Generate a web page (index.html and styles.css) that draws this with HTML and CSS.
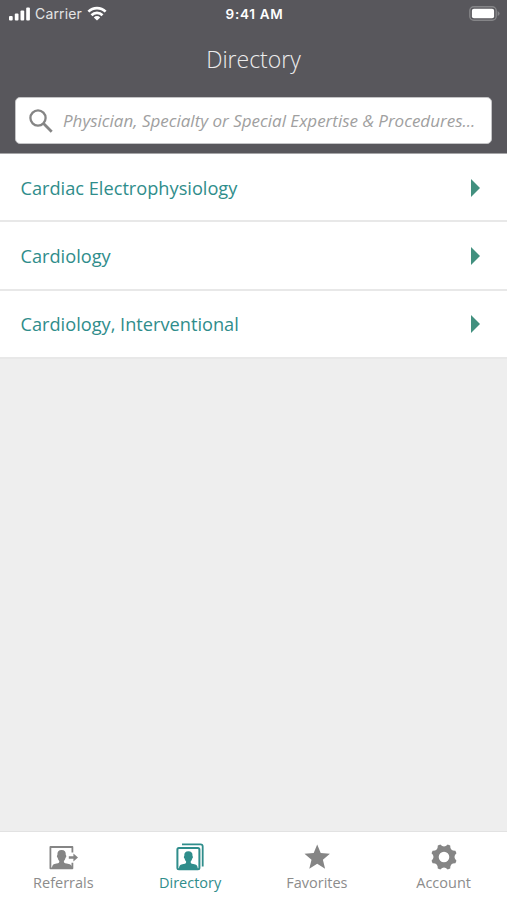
FILE: index.html
```html
<!DOCTYPE html>
<html lang="en">
<head>
    <meta charset="UTF-8">
    <meta name="viewport" content="width=device-width, initial-scale=1.0">
    <title>Directory</title>
    <link rel="stylesheet" href="styles.css">
</head>
<body>
    <header class="header">
        <div class="status-bar">
            <div class="status-left">
                <svg class="signal" width="22" height="14" viewBox="0 0 22 14" fill="currentColor">
                    <rect x="0" y="9" width="3.7" height="4.6" rx="1"/>
                    <rect x="5.8" y="6.5" width="3.7" height="7.1" rx="1"/>
                    <rect x="11.500" y="3.500" width="3.7" height="10.1" rx="1"/>
                    <rect x="17.2" y="0.500" width="3.7" height="13.1" rx="1"/>
                </svg>
                <span class="carrier">Carrier</span>
                <svg class="wifi" width="20" height="15" viewBox="0 0 20 15" fill="none" stroke="currentColor" stroke-width="2.700">
                    <path d="M1.400 5.600a12.200 12.200 0 0 1 17.200 0"/>
                    <path d="M4.500 9.200a7.700 7.700 0 0 1 11 0"/>
                    <path d="M10 14.600l-3.200-3.200a4.500 4.500 0 0 1 6.400 0z" fill="currentColor" stroke="none"/>
                </svg>
            </div>
            <span class="time">9:41 AM</span>
            <svg class="battery" width="31" height="15" viewBox="0 0 31 15">
                <rect x="0.8" y="0.8" width="26.4" height="13.4" rx="4" fill="none" stroke="#858588" stroke-width="1.4"/>
                <rect x="2.9" y="2.8" width="22.2" height="9.4" rx="2" fill="#fff"/>
                <path d="M28.6 5v5q2-1 2-2.500t-2-2.500z" fill="#858588"/>
            </svg>
        </div>
        <h1>Directory</h1>
        <form class="search">
            <svg width="24" height="24" viewBox="0 0 24 24" fill="none" stroke="#858585" stroke-width="2.300">
                <circle cx="9" cy="9" r="7.600"/>
                <path d="M14.300 14.300l8.400 8.400" stroke-width="2.800"/>
            </svg>
            <input type="text" placeholder="Physician, Specialty or Special Expertise &amp; Procedures...">
        </form>
    </header>

    <main class="list">
        <a class="row">Cardiac Electrophysiology <span class="arrow"></span></a>
        <a class="row">Cardiology <span class="arrow"></span></a>
        <a class="row">Cardiology, Interventional <span class="arrow"></span></a>
    </main>

    <nav class="tabs">
        <a class="tab">
            <svg width="30" height="28" viewBox="0 0 30 28">
                <path d="M24.400 9.500V4H2.400v21.300h22v-5.500" fill="none" stroke="currentColor" stroke-width="1.800" stroke-linejoin="round"/>
                <path d="M4 25.500c0-3.700 1.500-4.400 4.600-5 2.400-.5 2.800-1 2.700-2.600-1-1-1.400-2-1.600-3.200-1-.6-1-2.200-.3-2.800C9.200 8.700 10.600 7 13.600 7s4.400 1.700 4.200 4.900c.7.600.7 2.200-.3 2.800-.2 1.200-.6 2.200-1.600 3.200-.1 1.600.3 2.100 2.700 2.600 3.100.6 5.800 1.300 5.800 5z" fill="currentColor"/>
                <path d="M20.800 13.200h4.600v-2.700l4.600 4-4.600 4v-2.700h-4.600z" fill="currentColor"/>
            </svg>
            <span>Referrals</span>
        </a>
        <a class="tab active">
            <svg width="30" height="28" viewBox="0 0 30 28">
                <path d="M7 1.400h18.500q2.200 0 2.200 2.200v20" fill="none" stroke="currentColor" stroke-width="1.800"/>
                <rect x="2.400" y="5" width="22" height="21.300" rx="1.500" fill="none" stroke="currentColor" stroke-width="2"/>
                <path d="M4 26c0-3.700 1.500-4.300 4.500-4.900 2.400-.5 2.700-1 2.600-2.600-.9-.9-1.300-1.800-1.500-3-.9-.6-.9-2-.3-2.600C9.100 9.900 10.500 8.300 13.400 8.300s4.300 1.600 4.100 4.600c.6.600.6 2-.3 2.600-.2 1.200-.6 2.100-1.500 3-.1 1.600.2 2.100 2.600 2.600 3 .6 4.500 1.200 4.500 4.900z" fill="currentColor"/>
            </svg>
            <span>Directory</span>
        </a>
        <a class="tab">
            <svg width="30" height="28" viewBox="0 0 30 28" fill="currentColor">
                <path d="M15.200 1.500l3.500 8.600 9.200.6-7 6 2.200 9-7.900-4.900-7.900 4.900 2.200-9-7-6 9.200-.6z"/>
            </svg>
            <span>Favorites</span>
        </a>
        <a class="tab">
            <svg width="30" height="28" viewBox="-15 -14 30 28" fill="currentColor">
                <path fill-rule="evenodd" d="M-3.690-12.460Q0-8.500 3.690-12.460L6.200-11.420Q6-6 11.420-6.200L12.460-3.690Q8.500 0 12.460 3.690L11.420 6.200Q6 6 6.200 11.420L3.690 12.460Q0 8.500-3.690 12.460L-6.200 11.420Q-6 6-11.420 6.200L-12.460 3.690Q-8.500 0-12.460-3.690L-11.420-6.200Q-6-6-6.200-11.420ZM-5.300 0a5.300 5.300 0 1 0 10.600 0a5.300 5.300 0 1 0-10.600 0Z"/>
            </svg>
            <span>Account</span>
        </a>
    </nav>
</body>
</html>
```

FILE: styles.css
```css
:root {
    --header-color: #58575c;
    --primary-color: #2f8d8b;
    --arrow-color: #42907f;
    --icon-color: #858585;
    --background-color: #eeeeee;
}

* {
    box-sizing: border-box;
}

body {
    margin: 0;
    height: 900px;
    display: flex;
    flex-direction: column;
    font-family: 'Open Sans', sans-serif;
    background-color: var(--background-color);
}

.header {
    height: 154px;
    background-color: var(--header-color);
    border-bottom: 1px solid #a5a5a7;
    color: #fff;
}

.status-bar {
    display: grid;
    grid-template-columns: 1fr auto 1fr;
    align-items: center;
    height: 27px;
    padding: 0 7px 0 9px;
    font-family: Inter, sans-serif;
    font-size: 14px;
}

.status-left {
    display: flex;
    align-items: center;
}

.carrier {
    margin: 0 5px 0 4px;
    letter-spacing: 0.15px;
    color: #e4e4e5;
}

.time {
    font-size: 13.5px;
    font-weight: 600;
    letter-spacing: 0.7px;
}

.battery {
    justify-self: end;
}

h1 {
    margin: 14px 0 0;
    font-size: 23px;
    font-weight: 300;
    line-height: 36px;
    text-align: center;
    color: #ededee;
}

.search {
    display: flex;
    align-items: center;
    height: 47px;
    margin: 20px 15px 0;
    padding: 0 13px;
    background-color: #fff;
    border: 1px solid #c4c4c6;
    border-radius: 5px;
}

.search svg {
    flex-shrink: 0;
}

.search input {
    flex: 1;
    min-width: 0;
    margin-left: 10px;
    padding: 0;
    border: none;
    outline: none;
    background: none;
    font-family: inherit;
    font-size: 17px;
    font-style: italic;
}

.search input::placeholder {
    color: #a0a0a0;
}

.list {
    flex: 1;
}

.row {
    display: flex;
    align-items: center;
    justify-content: space-between;
    height: 68.3px;
    padding: 1px 27px 0 20.5px;
    background-color: #fff;
    border-bottom: 2px solid #e8e8e8;
    font-size: 18.2px;
    color: var(--primary-color);
}

.arrow {
    border-left: 9px solid var(--arrow-color);
    border-top: 9px solid transparent;
    border-bottom: 9px solid transparent;
}

.tabs {
    display: grid;
    grid-template-columns: repeat(4, 1fr);
    height: 69px;
    background-color: #fff;
    border-top: 1px solid #e2e2e2;
}

.tab {
    display: flex;
    flex-direction: column;
    align-items: center;
    gap: 2px;
    padding-top: 11px;
    font-size: 14.5px;
    line-height: 20px;
    color: #8c8c8c;
}

.tab svg {
    color: var(--icon-color);
}

.tab.active,
.tab.active svg {
    color: var(--primary-color);
}
```
